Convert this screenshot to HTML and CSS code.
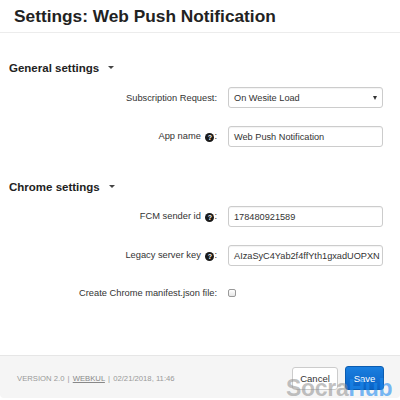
FILE: index.html
```html
<!DOCTYPE html>
<html>
<head>
<meta charset="utf-8">
<link rel="stylesheet" href="styles.css">
</head>
<body>
<div class="page">
  <div class="header"><h1 class="title">Settings: Web Push Notification</h1></div>
  <div class="content">
    <h2 class="section">General settings <span class="caret"></span></h2>
    <div class="form">
      <div class="row">
        <label class="label">Subscription Request:</label>
        <div class="select"><span>On Wesite Load</span><span class="arrow"></span></div>
      </div>
      <div class="row">
        <label class="label">App name <span class="help">?</span>:</label>
        <div class="input">Web Push Notification</div>
      </div>
    </div>
    <h2 class="section section2">Chrome settings <span class="caret"></span></h2>
    <div class="form">
      <div class="row">
        <label class="label">FCM sender id <span class="help">?</span>:</label>
        <div class="input">178480921589</div>
      </div>
      <div class="row">
        <label class="label">Legacy server key <span class="help">?</span>:</label>
        <div class="input">AIzaSyC4Yab2f4ffYth1gxadUOPXN</div>
      </div>
      <div class="row row-check">
        <label class="label">Create Chrome manifest.json file:</label>
        <div class="checkbox"></div>
      </div>
    </div>
  </div>
  <div class="footer">
    <div class="meta">VERSION 2.0 <span class="sep">|</span> <span class="link">WEBKUL</span> <span class="sep">|</span> 02/21/2018, 11:46</div>
    <div class="buttons">
      <button class="btn btn-cancel">Cancel</button>
      <button class="btn btn-save">Save</button>
    </div>
    <div class="watermark"><span class="wm-gray">Socra</span><span class="wm-blue">Hub</span></div>
  </div>
</div>
</body>
</html>
```

FILE: styles.css
```css
html, body {
  margin: 0;
  padding: 0;
  background: #fff;
}
body {
  font-family: "Liberation Sans", Arial, sans-serif;
  color: #333;
}
.page {
  width: 400px;
  height: 400px;
  display: flex;
  flex-direction: column;
  overflow: hidden;
  position: relative;
}
.header {
  height: 33px;
  border-bottom: 1px solid #ececec;
  padding-left: 14px;
  box-sizing: border-box;
}
.title {
  margin: 0;
  font-size: 17.3px;
  font-weight: bold;
  color: #222;
  line-height: 33px;
}
.content {
  flex: 1;
}
.section {
  margin: 0;
  font-size: 11.5px;
  font-weight: bold;
  color: #222;
  padding-left: 9px;
  height: 14px;
  line-height: 14px;
  margin-top: 28px;
}
.section2 {
  margin-top: 33px;
}
.caret {
  display: inline-block;
  width: 0;
  height: 0;
  border-left: 3px solid transparent;
  border-right: 3px solid transparent;
  border-top: 3px solid #444;
  vertical-align: middle;
  margin-left: 6px;
  margin-top: -2px;
}
.form {
  display: flex;
  flex-direction: column;
  gap: 18px;
  margin-top: 12px;
}
.row {
  display: grid;
  grid-template-columns: 217px 155px;
  column-gap: 11px;
  align-items: center;
  height: 21px;
}
.row-check {
  height: 14px;
  margin-top: 2px;
}
.label {
  text-align: right;
  font-size: 9.3px;
  color: #333;
}
.help {
  display: inline-block;
  width: 9px;
  height: 9px;
  border-radius: 50%;
  background: #1a1a1a;
  color: #fff;
  font-size: 7px;
  font-weight: bold;
  line-height: 9px;
  text-align: center;
  vertical-align: -1px;
  margin-left: 2px;
}
.select, .input {
  height: 21px;
  box-sizing: border-box;
  border: 1px solid #ccc;
  border-radius: 3px;
  background: #fff;
  font-size: 9.2px;
  color: #333;
  padding-left: 5px;
  display: flex;
  align-items: center;
  white-space: nowrap;
  overflow: hidden;
  box-shadow: inset 0 1px 1px rgba(0,0,0,0.05);
}
.select {
  justify-content: space-between;
  padding-right: 5px;
}
.arrow {
  width: 0;
  height: 0;
  border-left: 2.5px solid transparent;
  border-right: 2.5px solid transparent;
  border-top: 4px solid #333;
}
.checkbox {
  width: 8px;
  height: 8px;
  box-sizing: border-box;
  border: 1px solid #999;
  border-radius: 2px;
  background: linear-gradient(#fff, #e6e6e6);
}
.footer {
  height: 42px;
  margin-bottom: 2px;
  border-top: 1px solid #e6e6e6;
  background: #f5f5f5;
  border-bottom-left-radius: 4px;
  border-bottom-right-radius: 4px;
  display: flex;
  align-items: center;
  justify-content: space-between;
  padding: 0 16px 0 17px;
  position: relative;
}
.meta {
  font-size: 7.7px;
  color: #999;
  margin-top: 2px;
}
.sep {
  color: #999;
  margin: 0 1px;
}
.link {
  text-decoration: underline;
  color: #888;
}
.buttons {
  display: flex;
  gap: 7px;
  align-items: center;
  margin-top: 2px;
}
.btn {
  font-family: "Liberation Sans", Arial, sans-serif;
  font-size: 9.5px;
  height: 23px;
  border-radius: 3px;
  padding: 0;
  cursor: pointer;
}
.btn-cancel {
  width: 46px;
  border: 1px solid #ccc;
  background: #fff;
  color: #333;
}
.btn-save {
  width: 39px;
  height: 24px;
  border: 1px solid #0b5cb0;
  background: linear-gradient(#1a7fe0, #0a62c4);
  color: #fff;
}
.watermark {
  position: absolute;
  left: 286px;
  top: 21px;
  font-family: "Liberation Sans", Arial, sans-serif;
  font-weight: bold;
  font-size: 23px;
  letter-spacing: -0.3px;
  line-height: 23px;
  white-space: nowrap;
  pointer-events: none;
}
.wm-gray {
  color: rgba(140, 140, 140, 0.55);
}
.wm-blue {
  color: rgba(30, 140, 240, 0.6);
}
```
